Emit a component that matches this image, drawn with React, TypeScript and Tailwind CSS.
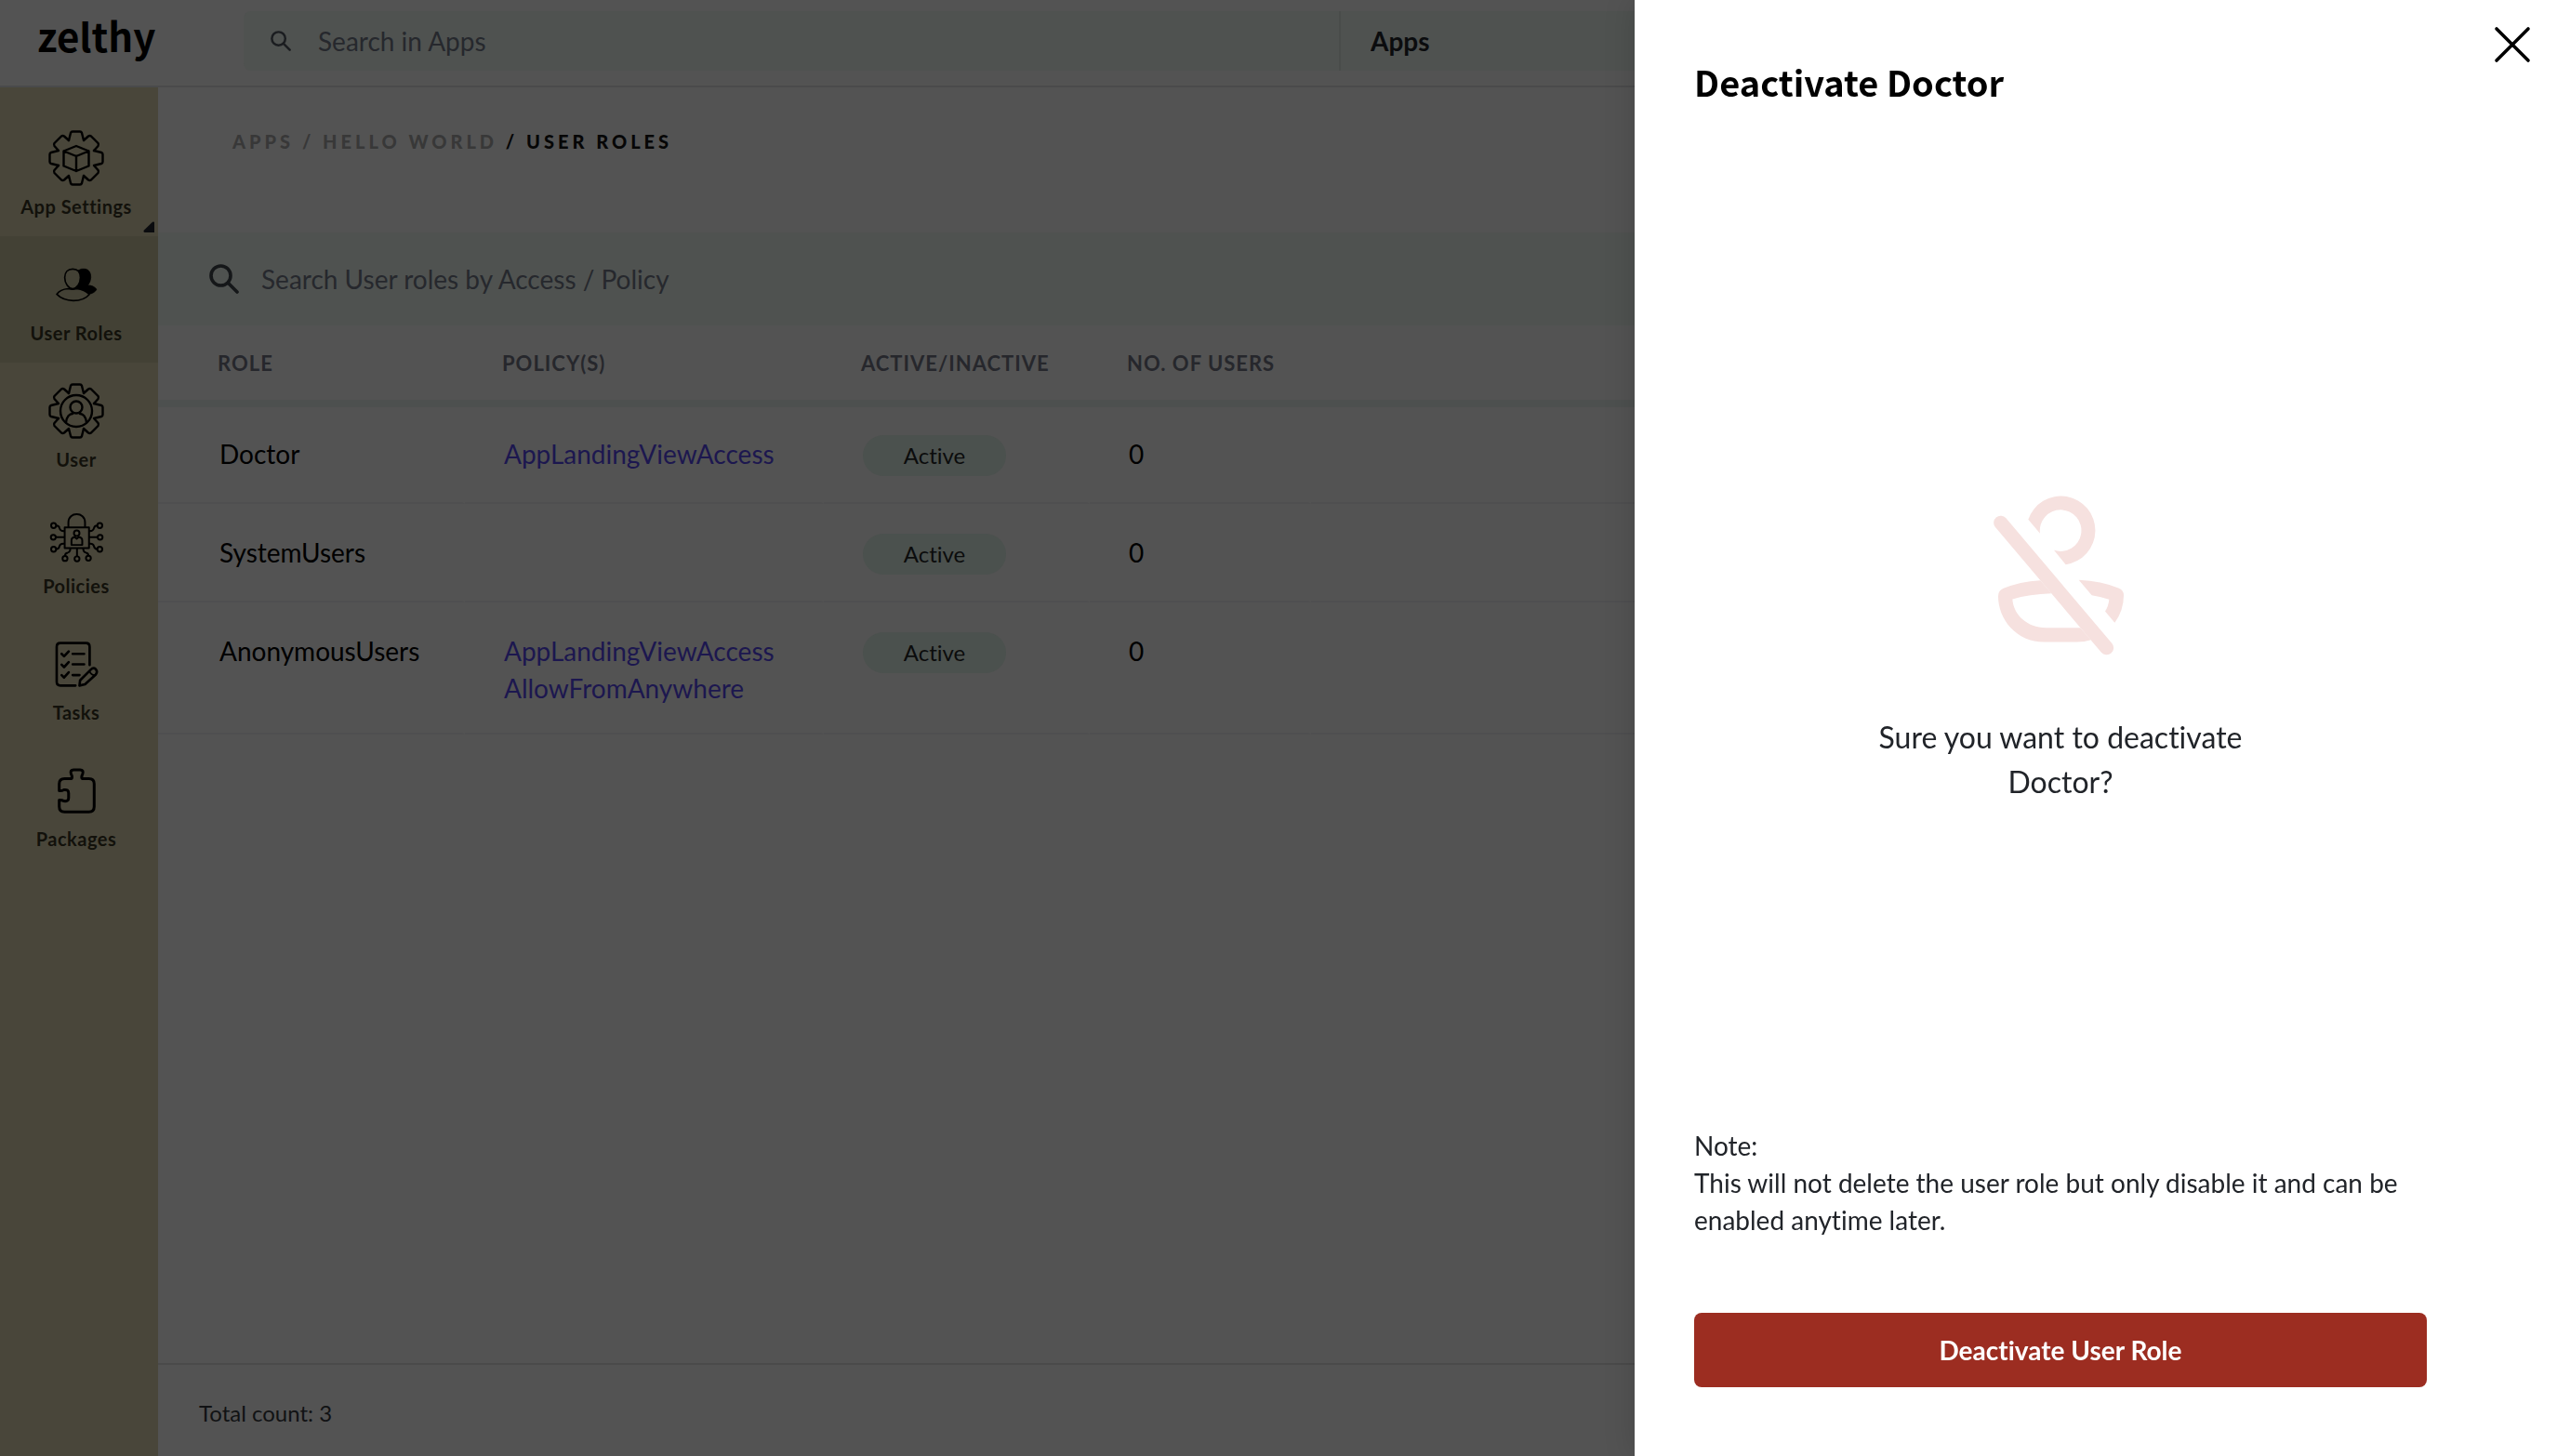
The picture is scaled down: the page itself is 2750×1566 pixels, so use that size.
import type { ReactNode } from "react";

const gearSide =
  "M22 11 L24 3 Q24.5 1.5 26 1.5 H34 Q35.5 1.5 36 3 L38 11 L43 6.5 Q44.5 5.5 46 6.5 L53.5 14 Q54.5 15.5 53.5 17 L49 22";

function Gear({ children }: { children: ReactNode }) {
  return (
    <svg viewBox="0 0 60 60" className="size-15" fill="none" stroke="currentColor" strokeWidth="2.4" strokeLinejoin="round" strokeLinecap="round">
      <path d={gearSide} />
      <path d={gearSide} transform="rotate(90 30 30)" />
      <path d={gearSide} transform="rotate(180 30 30)" />
      <path d={gearSide} transform="rotate(270 30 30)" />
      {children}
    </svg>
  );
}

function AppSettingsIcon() {
  return (
    <Gear>
      <path d="M30 17 L43.5 22.5 V38.5 L30 44 L16.5 38.5 V22.5 Z M16.5 22.5 L30 28 L43.5 22.5 M30 28 V44" />
    </Gear>
  );
}

function UserIcon() {
  return (
    <Gear>
      <circle cx="30" cy="30" r="17" />
      <circle cx="30" cy="26" r="6.5" />
      <path d="M19 42.5 C19.5 36 23 33 26 33 M41 42.5 C40.5 36 37 33 34 33" />
    </Gear>
  );
}

function UserRolesIcon() {
  return (
    <svg viewBox="178 112 136 112" className="h-[37px] w-[45px]" stroke="currentColor" strokeWidth="5" strokeLinejoin="round">
      <path d="M250 121 Q262 113 275 116 Q292 120 292 143 Q291 160 282 169 Q300 169 311 182 Q305 194 286 198 Q270 186 246 182 Z" fill="currentColor" strokeWidth="2" />
      <path d="M181 198 Q192 182 218 180 Q233 184 246 180 Q272 183 287 199 Q270 219 235 219 Q200 218 181 198 Z" fill="#434135" />
      <path d="M233 116 C250 116 258 127 258 144 C258 162 247 180 233 180 C219 180 207 162 207 144 C207 127 217 116 233 116 Z" fill="#434135" />
    </svg>
  );
}

function PoliciesIcon() {
  return (
    <svg viewBox="158 64 176 160" className="h-[53px] w-[59px]" fill="none" stroke="currentColor" strokeWidth="6" strokeLinejoin="round">
      <rect x="207" y="110" width="79" height="67" />
      <path d="M219 110 V94 C219 58 273 58 273 94 V110" />
      <circle cx="246" cy="129" r="9" />
      <path d="M229 167 V153 Q229 142 240 142 L246 147 L252 142 Q264 142 264 153 V167 Z" />
      <g>
        <circle cx="171" cy="104" r="8" />
        <circle cx="170" cy="142" r="8" />
        <circle cx="171" cy="181" r="8" />
        <circle cx="321" cy="104" r="8" />
        <circle cx="322" cy="142" r="8" />
        <circle cx="321" cy="181" r="8" />
        <circle cx="208" cy="211" r="8" />
        <circle cx="247" cy="212" r="8" />
        <circle cx="284" cy="210" r="8" />
      </g>
      <path d="M179 104 Q189 104 190 112 Q192 123 207 122 M178 142 H207 M179 181 Q189 180 190 171 Q192 161 207 163" />
      <path d="M313 104 Q304 104 302 112 Q300 123 286 122 M314 142 H286 M313 181 Q304 180 302 171 Q300 161 286 163" />
      <path d="M208 203 Q208 193 217 192 Q226 190 225 177 M247 204 V177 M284 202 Q284 193 276 192 Q267 190 267 177" />
    </svg>
  );
}

function TasksIcon() {
  return (
    <svg viewBox="176 478 140 148" className="h-[49px] w-[47px]" fill="none" stroke="currentColor" strokeWidth="8" strokeLinejoin="round" strokeLinecap="round">
      <path d="M242 621 H193 Q181 621 181 609 V495 Q181 483 193 483 H276 Q288 483 288 495 V554" />
      <path d="M197 518 L205 526 L220 510 M197 553 L205 561 L220 545 M197 587 L205 595 L220 578" />
      <path d="M233 518 H270 M233 552 H270 M233 587 H255" />
      <path d="M255 621 L257 604 L292 569 Q300 561 308 568 Q315 576 308 585 L273 617 Z" />
      <path d="M288 575 Q293 587 303 587" strokeWidth="5" />
    </svg>
  );
}

function PackagesIcon() {
  return (
    <svg viewBox="185 886 122 146" className="h-[49px] w-[41px]" fill="none" stroke="currentColor" strokeWidth="9" strokeLinejoin="round" strokeLinecap="round">
      <path d="M190 959 V937 Q190 920 207 920 H230 Q233 914 228 905 Q224 892 236 892 H257 Q269 892 265 905 Q260 914 263 920 H285 Q302 920 302 937 V1010 Q302 1027 285 1027 H207 Q190 1027 190 1010 V989 Q198 988 205 992 Q220 994 220 982 V967 Q220 954 205 956 Q198 960 190 959 Z" />
    </svg>
  );
}

function SearchIcon({ className }: { className: string }) {
  return (
    <svg viewBox="0 0 32 32" className={className} fill="none" stroke="currentColor" strokeWidth="3.6" strokeLinecap="round" aria-hidden="true">
      <circle cx="12.5" cy="12.5" r="10.5" />
      <path d="M20.5 20.5 L30 30" />
    </svg>
  );
}

function DeactivatedUserIcon() {
  return (
    <svg viewBox="131 98 435 518" className="h-[173px] w-[145px]" fill="#f6e1df" aria-hidden="true">
      <path d="M243 178 A111 111 0 1 1 364 323 L326 277 A67 67 0 1 0 281 223 Z" />
      <path d="M282 374 Q215 378 163 400 Q146 407 146 425 C146 500 205 573 295 573 H400 Q425 573 445 566 L411 527 H300 C240 527 195 485 192 435 Q245 418 318 416 Z" />
      <path d="M406 373 Q480 377 534 399 Q551 406 551 422 Q551 470 522 511 L491 474 Q502 458 504 436 Q480 427 448 422 Z" />
      <path d="M154 188 L496 592" stroke="#f6e1df" strokeWidth="45" strokeLinecap="round" />
    </svg>
  );
}

const navItems = [
  { label: "App Settings", icon: <AppSettingsIcon />, menu: true },
  { label: "User Roles", icon: <UserRolesIcon />, active: true },
  { label: "User", icon: <UserIcon /> },
  { label: "Policies", icon: <PoliciesIcon /> },
  { label: "Tasks", icon: <TasksIcon /> },
  { label: "Packages", icon: <PackagesIcon /> },
];

const roles = [
  { name: "Doctor", policies: ["AppLandingViewAccess"], users: 0 },
  { name: "SystemUsers", policies: [], users: 0 },
  { name: "AnonymousUsers", policies: ["AppLandingViewAccess", "AllowFromAnywhere"], users: 0 },
];

function Header() {
  return (
    <header className="flex h-[94px] shrink-0 items-start border-b-2 border-[#4a4a4b]">
      <a href="#home" className="w-[262px] shrink-0 pt-2 pl-10 font-['Noto_Sans_CJK_SC',sans-serif] text-[42px] leading-[60px] font-bold text-black">
        zelthy
      </a>
      <div className="mt-3 flex h-16 grow items-center rounded-lg bg-[#4f5250]">
        <label className="flex w-[1180px] items-center border-r-2 border-[#494c4a] pl-[29px]">
          <SearchIcon className="size-[22px] shrink-0 text-[#1b1d20]" />
          <input
            aria-label="Search in Apps"
            placeholder="Search in Apps"
            className="ml-[29px] h-16 grow bg-transparent text-[28px] outline-none placeholder:text-[#26282d]"
          />
        </label>
        <select aria-label="Search scope" className="h-16 w-[400px] appearance-none bg-transparent pl-8 text-[28px] font-bold text-[#0b0c0e]">
          <option>Apps</option>
        </select>
      </div>
    </header>
  );
}

function Sidebar() {
  return (
    <nav className="w-[170px] shrink-0 bg-[#49463a] pt-6">
      {navItems.map((item) => (
        <a
          key={item.label}
          href="#section"
          className={`relative flex h-[136px] flex-col items-center gap-2 pt-[22px] pr-[6px] ${item.active ? "bg-[#434135]" : ""}`}
        >
          <span className="flex h-15 items-center text-black">{item.icon}</span>
          <span className="text-[20px] leading-7 font-bold tracking-wide text-[#12110b]">{item.label}</span>
          {item.menu && (
            <svg viewBox="0 0 12 12" className="absolute right-1 bottom-1 size-3 fill-[#0a0b0e]">
              <path d="M12 1 V12 H1.5 Q0 11.5 .5 10 L10 .8 Q11.5 0 12 1 Z" />
            </svg>
          )}
        </a>
      ))}
    </nav>
  );
}

function RolesTable() {
  const head = "h-20 border-b-8 border-[#4d504f] text-left text-[22px] font-bold tracking-[1px] text-[#26272c]";
  return (
    <table className="w-full table-fixed border-separate border-spacing-0">
      <colgroup>
        <col className="w-[330px]" />
        <col className="w-[386px]" />
        <col className="w-[286px]" />
        <col className="w-[238px]" />
        <col />
      </colgroup>
      <thead>
        <tr className="h-[88px]">
          <th className={`${head} pl-16`}>ROLE</th>
          <th className={`${head} pl-10`}>POLICY(S)</th>
          <th className={`${head} pl-10`}>ACTIVE/INACTIVE</th>
          <th className={`${head} pl-10`}>NO. OF USERS</th>
          <th className={head} aria-label="Actions" />
        </tr>
      </thead>
      <tbody>
        {roles.map((role, index) => {
          const cell = `border-r-3 border-b-2 border-r-[#535353] border-b-[#4f4f50] pb-7 align-top text-[28px] leading-10 ${index === 0 ? "pt-[30px]" : "pt-8"}`;
          return (
            <tr key={role.name}>
              <td className={`${cell} pl-[66px] text-black`}>{role.name}</td>
              <td className={`${cell} pl-[42px]`}>
                {role.policies.map((policy) => (
                  <a key={policy} href="#policy" className="block text-[#1c174f]">
                    {policy}
                  </a>
                ))}
              </td>
              <td className={`${cell} pl-[42px]`}>
                <span className="flex h-11 w-[154px] items-center justify-center rounded-full bg-[#4b514e] text-[24px] text-[#0b0c0c]">
                  Active
                </span>
              </td>
              <td className={`${cell} pl-[42px] text-black`}>{role.users}</td>
              <td className={cell} />
            </tr>
          );
        })}
      </tbody>
    </table>
  );
}

function DeactivateDrawer() {
  return (
    <aside
      role="dialog"
      aria-labelledby="drawer-title"
      className="fixed inset-y-0 right-0 flex w-[992px] flex-col bg-white pr-[140px] pb-[74px] pl-16 shadow-[0_0_32px_rgba(0,0,0,0.15)]"
    >
      <button type="button" aria-label="Close" className="absolute top-6 right-6 flex size-12 items-center justify-center text-black">
        <svg viewBox="0 0 40 40" className="size-10" fill="none" stroke="currentColor" strokeWidth="3.6" strokeLinecap="round">
          <path d="M3 3 L37 37 M37 3 L3 37" />
        </svg>
      </button>
      <h2 id="drawer-title" className="pt-[58px] font-['Noto_Sans_CJK_SC',sans-serif] text-[38px] leading-[60px] font-semibold text-black">
        Deactivate Doctor
      </h2>
      <div className="flex grow flex-col items-center justify-center gap-16 pt-[66px]">
        <DeactivatedUserIcon />
        <p className="w-[440px] text-center text-[32px] leading-12 text-[#212429]">Sure you want to deactivate Doctor?</p>
      </div>
      <p className="text-[28px] leading-10 text-[#212429]">
        Note:
        <br />
        This will not delete the user role but only disable it and can be enabled anytime later.
      </p>
      <button type="button" className="mt-20 h-20 rounded-lg bg-[#9c2d21] text-[28px] font-bold text-white">
        Deactivate User Role
      </button>
    </aside>
  );
}

export default function App() {
  return (
    <div className="flex h-screen flex-col overflow-hidden bg-[#535353] font-['Lato',sans-serif] [font-variant-ligatures:none]">
      <Header />
      <div className="flex min-h-0 grow">
        <Sidebar />
        <main className="flex min-w-0 grow flex-col">
          <div className="flex h-[156px] shrink-0 pt-[42px] pl-20">
            <nav aria-label="Breadcrumb" className="text-[20px] leading-8 font-black tracking-[4px] text-[#383838]">
              <a href="#apps">APPS</a> / <a href="#hello-world">HELLO WORLD</a> <span className="text-[#060606]">/ USER ROLES</span>
            </nav>
          </div>
          <label className="flex h-[100px] shrink-0 items-center bg-[#4f5250] pl-[55px]">
            <SearchIcon className="size-8 shrink-0 text-[#151719]" />
            <input
              aria-label="Search user roles"
              placeholder="Search User roles by Access / Policy"
              className="ml-6 h-full grow bg-transparent text-[28px] outline-none placeholder:text-[#26282d]"
            />
          </label>
          <RolesTable />
          <footer className="mt-auto flex h-[100px] shrink-0 border-t-2 border-[#4a4a4a] pt-[34px] pl-11 text-[24px] leading-9 text-[#111214]">
            Total count: 3
          </footer>
        </main>
      </div>
      <DeactivateDrawer />
    </div>
  );
}
